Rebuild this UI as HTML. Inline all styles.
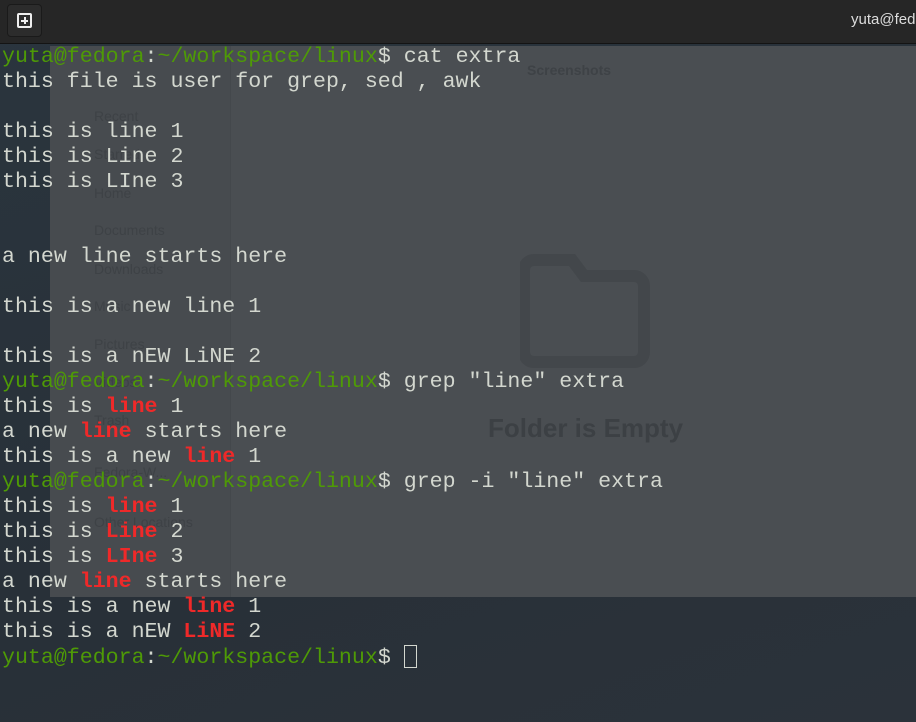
<!DOCTYPE html>
<html><head><style>
body{margin:0;width:916px;height:722px;overflow:hidden;background:linear-gradient(160deg,#2a353e 0%,#283038 60%,#2b323a 100%);position:relative;font-family:"Liberation Sans",sans-serif}
.hdr{position:absolute;left:0;top:0;width:916px;height:43px;background:#262626;border-bottom:1px solid #141414}
.btn{position:absolute;left:7px;top:4px;width:33px;height:31px;background:#2c2c2c;border:1px solid #1a1a1a;border-radius:4px}
.btn div{position:absolute;left:9px;top:8px;width:11px;height:11px;border:2px solid #eee;border-radius:2px}
.btn div:before{content:"";position:absolute;left:2px;top:4.5px;width:7px;height:2px;background:#eee}
.btn div:after{content:"";position:absolute;left:4.5px;top:2px;width:2px;height:7px;background:#eee}
.title{position:absolute;left:851px;top:11px;color:#ddd;font-size:15px}
.files{position:absolute;left:50px;top:46px;width:866px;height:551px;background:#4a4e52;border-radius:0 0 0 8px}
.side{position:absolute;left:50px;top:46px;width:180px;height:551px;background:#474b4f;border-right:1px solid #44484c}
.sl{position:absolute;left:94px;color:#3e4246;font-size:14px}
.term{position:absolute;left:2px;top:45px;font-family:"Liberation Mono",monospace;font-size:21.6px;line-height:25px;color:#d3d7cf;white-space:pre}
.g{color:#4e9a06}.r{color:#ef2929;font-weight:bold}
.cur{display:inline-block;width:13px;height:23px;border:1px solid #d3d7cf;box-sizing:border-box;vertical-align:-5px}
</style></head><body>
<div class="hdr"><div class="btn"><div></div></div><div class="title">yuta@fed</div></div>
<div class="files"></div>
<div class="side"></div>
<div class="sl" style="top:108px">Recent</div>
<div class="sl" style="top:146px">Starred</div>
<div class="sl" style="top:185px">Home</div>
<div class="sl" style="top:222px">Documents</div>
<div class="sl" style="top:261px">Downloads</div>
<div class="sl" style="top:298px">Music</div>
<div class="sl" style="top:336px">Pictures</div>
<div class="sl" style="top:374px">Videos</div>
<div class="sl" style="top:412px">Trash</div>
<div class="sl" style="top:464px">Fedora-W...</div>
<div class="sl" style="top:514px">Other Locations</div>
<div style="position:absolute;left:527px;top:62px;color:#3e4246;font-size:14px;font-weight:bold">Screenshots</div>
<svg style="position:absolute;left:520px;top:252px" width="130" height="116"><path d="M14 8h38l12 16h50a10 10 0 0 1 10 10v66a10 10 0 0 1-10 10H14A10 10 0 0 1 4 100V18A10 10 0 0 1 14 8z" fill="none" stroke="#43474b" stroke-width="12"/></svg>
<div style="position:absolute;left:488px;top:413px;color:#3c4044;font-size:26px;font-weight:bold">Folder is Empty</div>
<div class="term"><span class="g">yuta@fedora</span>:<span class="g">~/workspace/linux</span>$ cat extra
this file is user for grep, sed , awk

this is line 1
this is Line 2
this is LIne 3


a new line starts here

this is a new line 1

this is a nEW LiNE 2
<span class="g">yuta@fedora</span>:<span class="g">~/workspace/linux</span>$ grep "line" extra
this is <span class="r">line</span> 1
a new <span class="r">line</span> starts here
this is a new <span class="r">line</span> 1
<span class="g">yuta@fedora</span>:<span class="g">~/workspace/linux</span>$ grep -i "line" extra
this is <span class="r">line</span> 1
this is <span class="r">Line</span> 2
this is <span class="r">LIne</span> 3
a new <span class="r">line</span> starts here
this is a new <span class="r">line</span> 1
this is a nEW <span class="r">LiNE</span> 2
<span class="g">yuta@fedora</span>:<span class="g">~/workspace/linux</span>$ <span class="cur"></span></div>
</body></html>
